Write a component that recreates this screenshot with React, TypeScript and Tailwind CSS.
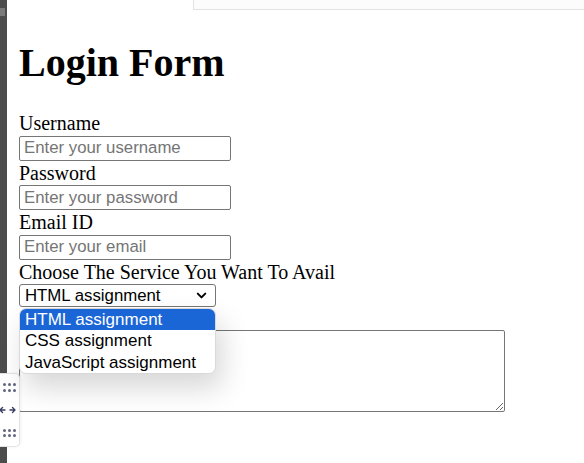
import { ChevronDown } from "lucide-react";

const serif = "font-['Liberation_Serif',_'Times_New_Roman',_serif]";
const sans = "font-['Liberation_Sans',_Arial,_sans-serif]";

const fields = [
  { label: "Username", placeholder: "Enter your username" },
  { label: "Password", placeholder: "Enter your password" },
  { label: "Email ID", placeholder: "Enter your email" },
];

const options = ["HTML assignment", "CSS assignment", "JavaScript assignment"];

function Dots() {
  return (
    <div className="grid grid-cols-3 gap-x-[2px] gap-y-[2.5px] w-[13px]">
      {Array.from({ length: 6 }).map((_, i) => (
        <span key={i} className="w-[3px] h-[3px] rounded-full bg-[#62667f]" />
      ))}
    </div>
  );
}

export default function App() {
  return (
    <div className="relative w-[584px] h-[463px] overflow-hidden bg-white flex text-black">
      {/* editor side bar */}
      <div className="w-[7px] shrink-0 bg-[#4c4c4c] flex flex-col">
        <div className="h-[8px]" />
        <div className="h-[8px] w-[5px] bg-[#7a7a7a]" />
      </div>

      <div className="flex-1 flex flex-col">
        <div className="h-[10px] ml-[186px] border-l border-b border-[#e2e2e2] bg-[#fcfcfc]" />

        <div className={`${serif} pl-[12px] flex flex-col items-start`}>
          <h1 className="mt-[30px] text-[40px] leading-[45px] font-bold">Login Form</h1>

          <div className="mt-[26px] flex flex-col items-start">
            {fields.map((f) => (
              <div key={f.label} className="flex flex-col items-start">
                <label className="text-[20px] leading-[24.5px]">{f.label}</label>
                <input
                  type="text"
                  placeholder={f.placeholder}
                  className={`${sans} w-[212px] h-[25px] px-[4px] text-[16.8px] border border-[#767676] rounded-[2px] placeholder:text-[#757575] outline-none`}
                />
              </div>
            ))}

            <label className="text-[20px] leading-[24.5px]">Choose The Service You Want To Avail</label>
            <div
              className={`${sans} relative w-[197px] h-[22.5px] border border-[#767676] rounded-[3px] flex items-center justify-between pl-[5px] pr-[6px] text-[16.8px]`}
            >
              <span>HTML assignment</span>
              <ChevronDown size={15} strokeWidth={3.2} />

              <div className="absolute left-[-1px] top-[22.5px] w-[197px] bg-white rounded-[7px] overflow-hidden border border-[#d9d9d9] shadow-[6px_14px_28px_rgba(0,0,0,0.16)] z-10">
                {options.map((o, i) => (
                  <div
                    key={o}
                    className={`h-[21.5px] leading-[21.5px] pl-[5px] text-[17px] ${i === 0 ? "bg-[#1b66d6] text-white" : "text-black"}`}
                  >
                    {o}
                  </div>
                ))}
              </div>
            </div>

            <div className="h-[23px]" />
            <textarea className="w-[486px] h-[82px] border border-[#767676] rounded-[2px] resize outline-none" />
          </div>
        </div>
      </div>

      {/* floating resize widget */}
      <div className="absolute left-0 top-[373px] w-[20px] h-[74px] bg-white border border-l-0 border-[#e3e3e3] rounded-r-[5px] flex flex-col items-center justify-between py-[9px] shadow-[1px_0_3px_rgba(0,0,0,0.06)]">
        <Dots />
        <svg width="17" height="8" viewBox="0 0 17 8" className="-ml-[4px]" fill="none" stroke="#3b3f66" strokeWidth="1.4" strokeLinecap="round" strokeLinejoin="round">
          <path d="M1 4h5M3.5 1.5L1 4l2.5 2.5" />
          <path d="M11 4h5M13.5 1.5L16 4l-2.5 2.5" />
        </svg>
        <Dots />
      </div>
    </div>
  );
}
